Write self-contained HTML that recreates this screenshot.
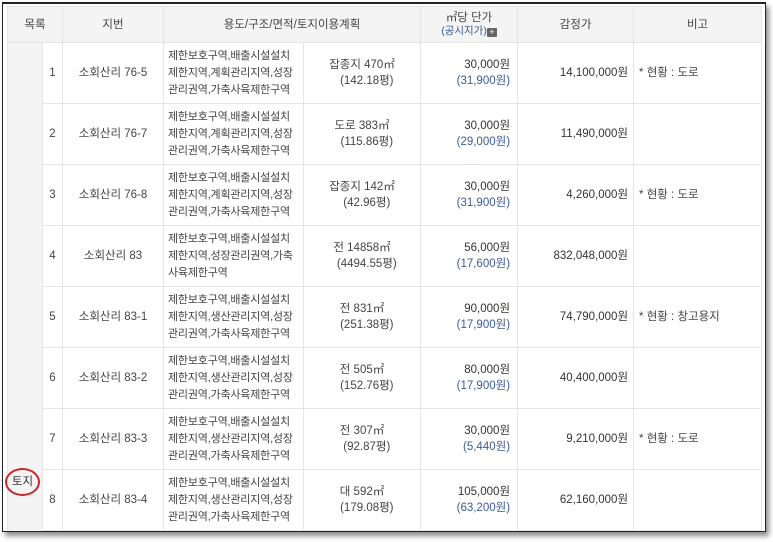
<!DOCTYPE html>
<html><head><meta charset="utf-8">
<style>
html,body{margin:0;padding:0;background:#fff;}
body{width:773px;height:542px;position:relative;overflow:hidden;font-family:"Liberation Sans","Noto Sans CJK KR",sans-serif;color:#444;font-size:11.5px;}
.frame{position:absolute;left:2px;top:2px;width:762px;height:527px;border:1px solid #222;border-top:2px solid #222;box-shadow:3px 4px 5px rgba(0,0,0,0.45);background:#fff;overflow:hidden;}
table{position:absolute;left:4px;top:2px;border-collapse:collapse;table-layout:fixed;width:754px;}
td,th{border:1px solid #e4e4e4;padding:0;text-align:center;vertical-align:middle;line-height:16px;}
th{background:#f4f4f4;font-weight:normal;height:35px;color:#444;}
tr.r td{height:60px;}
td.g{background:#f4f4f4;border-bottom:none;border-top:none;}
td.u{text-align:left;padding-left:4px;line-height:17px;font-size:11px;letter-spacing:-0.2px;}
td.p{text-align:right;padding-right:7px;color:#333;}
.b{color:#3a5a9c;}
td.k{text-align:right;padding-right:5px;color:#333;}
td.n{text-align:left;padding-left:5px;}
.pl{display:inline-block;width:10px;height:9px;background:#666;color:#fff;font-size:9px;line-height:9px;vertical-align:-1px;border-radius:1px}
.circle{position:absolute;left:5px;top:468px;width:35px;height:28px;border:2px solid #c8282b;border-radius:50%;box-sizing:border-box;text-align:center;line-height:24px;color:#333;}
</style></head><body>
<div class="frame">
<table>
<colgroup><col style="width:35px"><col style="width:20px"><col style="width:101px"><col style="width:140px"><col style="width:117px"><col style="width:97px"><col style="width:116px"><col style="width:128px"></colgroup>
<tr><th colspan="2">목록</th><th>지번</th><th colspan="2">용도/구조/면적/토지이용계획</th><th style="line-height:13px">㎡당 단가<br><span class="b" style="font-size:10.5px">(공시지가)</span><span class="pl">+</span></th><th>감정가</th><th>비고</th></tr>
<tr class="r"><td class="g" rowspan="8"></td><td>1</td><td>소회산리 76-5</td><td class="u">제한보호구역,배출시설설치<br>제한지역,계획관리지역,성장<br>관리권역,가축사육제한구역</td><td>잡종지 470㎡<br>&nbsp;&nbsp;&nbsp;(142.18평)</td><td class="p">30,000원<br><span class="b">(31,900원)</span></td><td class="k">14,100,000원</td><td class="n">* 현황 : 도로</td></tr>
<tr class="r"><td>2</td><td>소회산리 76-7</td><td class="u">제한보호구역,배출시설설치<br>제한지역,계획관리지역,성장<br>관리권역,가축사육제한구역</td><td>도로 383㎡<br>&nbsp;&nbsp;&nbsp;(115.86평)</td><td class="p">30,000원<br><span class="b">(29,000원)</span></td><td class="k">11,490,000원</td><td class="n"></td></tr>
<tr class="r"><td>3</td><td>소회산리 76-8</td><td class="u">제한보호구역,배출시설설치<br>제한지역,계획관리지역,성장<br>관리권역,가축사육제한구역</td><td>잡종지 142㎡<br>&nbsp;&nbsp;&nbsp;(42.96평)</td><td class="p">30,000원<br><span class="b">(31,900원)</span></td><td class="k">4,260,000원</td><td class="n">* 현황 : 도로</td></tr>
<tr class="r"><td>4</td><td>소회산리 83</td><td class="u">제한보호구역,배출시설설치<br>제한지역,성장관리권역,가축<br>사육제한구역</td><td>전 14858㎡<br>&nbsp;&nbsp;&nbsp;(4494.55평)</td><td class="p">56,000원<br><span class="b">(17,600원)</span></td><td class="k">832,048,000원</td><td class="n"></td></tr>
<tr class="r"><td>5</td><td>소회산리 83-1</td><td class="u">제한보호구역,배출시설설치<br>제한지역,생산관리지역,성장<br>관리권역,가축사육제한구역</td><td>전 831㎡<br>&nbsp;&nbsp;&nbsp;(251.38평)</td><td class="p">90,000원<br><span class="b">(17,900원)</span></td><td class="k">74,790,000원</td><td class="n">* 현황 : 창고용지</td></tr>
<tr class="r"><td>6</td><td>소회산리 83-2</td><td class="u">제한보호구역,배출시설설치<br>제한지역,생산관리지역,성장<br>관리권역,가축사육제한구역</td><td>전 505㎡<br>&nbsp;&nbsp;&nbsp;(152.76평)</td><td class="p">80,000원<br><span class="b">(17,900원)</span></td><td class="k">40,400,000원</td><td class="n"></td></tr>
<tr class="r"><td>7</td><td>소회산리 83-3</td><td class="u">제한보호구역,배출시설설치<br>제한지역,생산관리지역,성장<br>관리권역,가축사육제한구역</td><td>전 307㎡<br>&nbsp;&nbsp;&nbsp;(92.87평)</td><td class="p">30,000원<br><span class="b">(5,440원)</span></td><td class="k">9,210,000원</td><td class="n">* 현황 : 도로</td></tr>
<tr class="r"><td>8</td><td>소회산리 83-4</td><td class="u">제한보호구역,배출시설설치<br>제한지역,생산관리지역,성장<br>관리권역,가축사육제한구역</td><td>대 592㎡<br>&nbsp;&nbsp;&nbsp;(179.08평)</td><td class="p">105,000원<br><span class="b">(63,200원)</span></td><td class="k">62,160,000원</td><td class="n"></td></tr>
</table>
</div>
<div class="circle">토지</div>
</body></html>
